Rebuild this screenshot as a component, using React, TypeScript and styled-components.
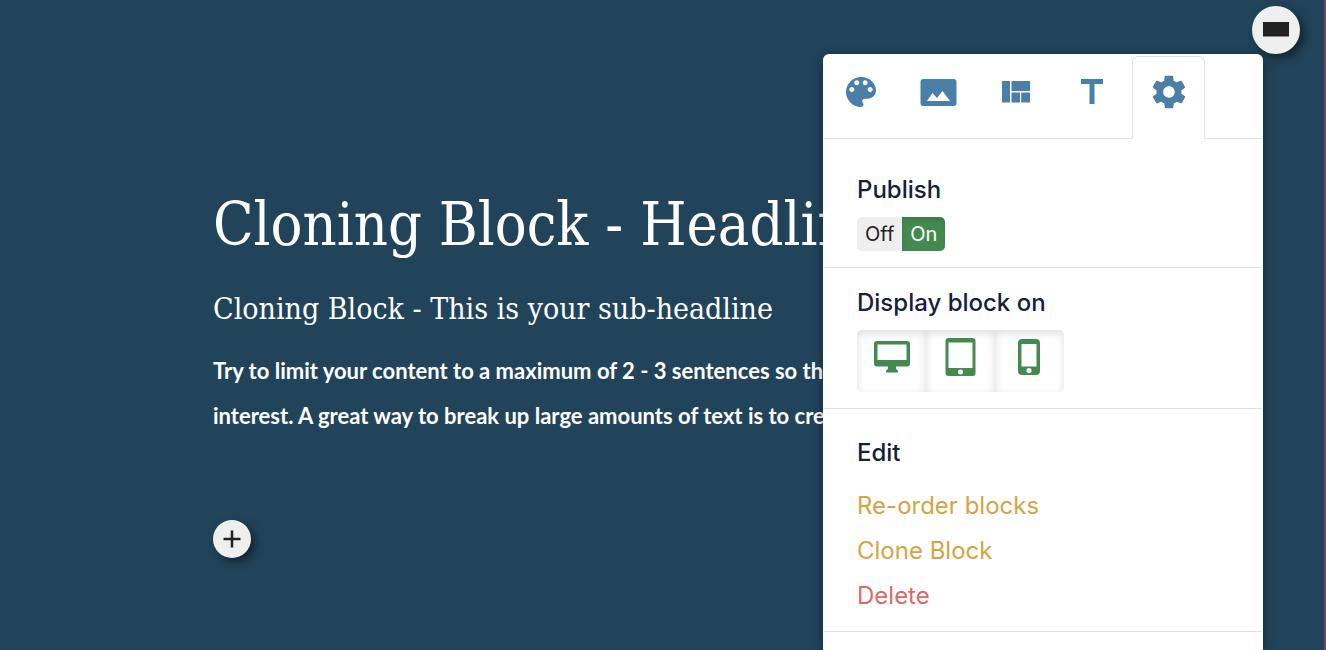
import React, { useState } from "react";
import styled, { createGlobalStyle } from "styled-components";
import { IoMdColorPalette, IoMdSettings } from "react-icons/io";

const GlobalStyle = createGlobalStyle`
  *, *::before, *::after { box-sizing: border-box; }
  body {
    margin: 0;
    background: #21445a;
    font-family: Inter, "Liberation Sans", sans-serif;
  }
`;

const Page = styled.div`
  position: relative;
  min-height: 100vh;
  overflow: hidden;
  background: #21445a;
  border-right: 2px solid #823d72;
`;

const Block = styled.main`
  padding: 185px 0 88px 213px;
  color: #fff;
  white-space: nowrap;
`;

const Headline = styled.h1`
  margin: 0;
  font: 400 59px/80px "DejaVu Serif Condensed", "DejaVu Serif", serif;
`;

const SubHeadline = styled.h2`
  margin: 24px 0 0;
  font: 400 30px/40px "DejaVu Serif Condensed", "DejaVu Serif", serif;
`;

const BodyText = styled.p`
  margin: 19px 0 0;
  font: 700 22px/45px Lato, sans-serif;
`;

const RoundButton = styled.button<{ $size: number }>`
  display: flex;
  align-items: center;
  justify-content: center;
  width: ${(p) => p.$size}px;
  height: ${(p) => p.$size}px;
  padding: 0;
  border: 0;
  border-radius: 50%;
  background: #efefef;
  color: #222;
  box-shadow: 4px 4px 10px rgba(0, 0, 0, 0.5);
  cursor: pointer;
`;

const AddButton = styled(RoundButton)`
  margin-top: 82px;
`;

const CollapseButton = styled(RoundButton)`
  position: absolute;
  top: 6px;
  right: 24px;
`;

const Panel = styled.aside`
  position: absolute;
  top: 54px;
  right: 61px;
  bottom: 0;
  width: 440px;
  padding: 2px 1px 0;
  border-radius: 6px 6px 0 0;
  background: #fff;
  color: #16203a;
  box-shadow: 0 2px 12px rgba(0, 0, 0, 0.4);
`;

const Tabs = styled.div`
  display: flex;
  gap: 4px;
  height: 83px;
  border-bottom: 1px solid #e2e2e4;
`;

const Tab = styled.button<{ $active: boolean }>`
  display: flex;
  justify-content: center;
  width: 73px;
  height: 83px;
  padding: 15px 0 0;
  border: 1px solid ${(p) => (p.$active ? "#e2e2e4" : "transparent")};
  border-bottom-color: ${(p) => (p.$active ? "#fff" : "#e2e2e4")};
  border-radius: ${(p) => (p.$active ? "6px 6px 0 0" : "0")};
  background: transparent;
  color: #4a7fa7;
  cursor: pointer;
`;

const Section = styled.section<{ $top: number; $bottom?: number }>`
  padding: ${(p) => p.$top}px 33px ${(p) => p.$bottom ?? 16}px;
  border-bottom: 1px solid #e2e2e4;
`;

const Title = styled.h3`
  margin: 0;
  font-size: 24px;
  font-weight: 500;
  line-height: 36px;
`;

const Group = styled.div`
  display: flex;
  width: fit-content;
  margin-top: 9px;
  overflow: hidden;
  border-radius: 5px;
`;

const HiddenInput = styled.input`
  position: absolute;
  opacity: 0;
  pointer-events: none;
`;

const Choice = styled.label<{ $on: boolean }>`
  padding: 0 8px;
  font-size: 20px;
  line-height: 34px;
  background: ${(p) => (p.$on ? "#448a50" : "#efefef")};
  color: ${(p) => (p.$on ? "#fff" : "#222")};
  box-shadow: ${(p) => (p.$on ? "inset 0 3px 5px rgba(0, 0, 0, 0.12)" : "none")};
  cursor: pointer;
`;

const Device = styled.label<{ $on: boolean }>`
  display: flex;
  justify-content: center;
  width: 69px;
  height: 62px;
  padding-top: 7px;
  background: #fff;
  color: ${(p) => (p.$on ? "#448a50" : "#999")};
  box-shadow: inset 0 3px 8px rgba(0, 0, 0, 0.14);
  cursor: pointer;
`;

const Links = styled.nav`
  display: flex;
  flex-direction: column;
  align-items: flex-start;
  margin-top: 12px;
`;

const ActionLink = styled.a<{ $danger?: boolean }>`
  font-size: 24px;
  line-height: 45px;
  color: ${(p) => (p.$danger ? "#dc6a67" : "#d3a545")};
  text-decoration: none;
`;

const ImageIcon = () => (
  <svg width="40" height="40" viewBox="0 0 40 40" fill="currentColor" aria-hidden="true">
    <path fillRule="evenodd" d="M5.500 7h30a3 3 0 0 1 3 3v21a3 3 0 0 1-3 3h-30a3 3 0 0 1-3-3V10a3 3 0 0 1 3-3ZM9 29h23L24.500 19l-5.500 7-4.500-5Z" />
  </svg>
);

const LayoutIcon = () => (
  <svg width="40" height="40" viewBox="0 0 40 40" fill="currentColor" aria-hidden="true">
    <path d="M7 9h8v21.500H7ZM16.500 9H35v10H16.500ZM16.500 20.500H25v10h-8.500ZM26.200 20.500H35v10h-8.800Z" />
  </svg>
);

const TextIcon = () => (
  <svg width="40" height="40" viewBox="0 0 40 40" fill="currentColor" aria-hidden="true">
    <path d="M9 7h22v5h-8.500v20h-5V12H9Z" />
  </svg>
);

const DesktopIcon = () => (
  <svg width="40" height="40" viewBox="0 0 40 40" fill="currentColor" aria-hidden="true">
    <path fillRule="evenodd" d="M5 4h30a3 3 0 0 1 3 3v19.500a3 3 0 0 1-3 3H24v2l2 2.500v1.500H14V34l2-2.500v-2H5a3 3 0 0 1-3-3V7a3 3 0 0 1 3-3Zm.500 3.500V23h29V7.500Z" />
  </svg>
);

const TabletIcon = () => (
  <svg width="40" height="40" viewBox="0 0 40 40" fill="currentColor" aria-hidden="true">
    <path fillRule="evenodd" d="M7.500 1h24a3 3 0 0 1 3 3v32a3 3 0 0 1-3 3h-24a3 3 0 0 1-3-3V4a3 3 0 0 1 3-3Zm0 4.500V31h24V5.500ZM19.500 32.500a2.500 2.500 0 1 0 0 5 2.500 2.500 0 0 0 0-5Z" />
  </svg>
);

const PhoneIcon = () => (
  <svg width="40" height="40" viewBox="0 0 40 40" fill="currentColor" aria-hidden="true">
    <path fillRule="evenodd" d="M12 2h14a4 4 0 0 1 4 4v28a4 4 0 0 1-4 4H12a4 4 0 0 1-4-4V6a4 4 0 0 1 4-4Zm-.500 5v22.500h15V7ZM19 31a2.600 2.600 0 1 0 0 5.200A2.600 2.600 0 0 0 19 31Z" />
  </svg>
);

const tabs = [
  { name: "Colors", icon: <IoMdColorPalette size={40} /> },
  { name: "Image", icon: <ImageIcon /> },
  { name: "Layout", icon: <LayoutIcon /> },
  { name: "Text", icon: <TextIcon /> },
  { name: "Settings", icon: <IoMdSettings size={40} /> },
];

const devices = [
  { name: "Desktop", icon: <DesktopIcon /> },
  { name: "Tablet", icon: <TabletIcon /> },
  { name: "Phone", icon: <PhoneIcon /> },
];

export default function App() {
  const [tab, setTab] = useState("Settings");
  const [published, setPublished] = useState("On");
  const [shown, setShown] = useState(["Desktop", "Tablet", "Phone"]);

  const toggle = (name: string) =>
    setShown((s) => (s.includes(name) ? s.filter((n) => n !== name) : [...s, name]));

  return (
    <>
      <GlobalStyle />
      <Page>
        <Block>
          <Headline>Cloning Block - Headline</Headline>
          <SubHeadline>Cloning Block - This is your sub-headline</SubHeadline>
          <BodyText>
            Try to limit your content to a maximum of 2 - 3 sentences so that
            <br />
            interest. A great way to break up large amounts of text is to create
          </BodyText>
          <AddButton $size={38} type="button" aria-label="Add element">
            <svg width="18" height="18" viewBox="0 0 18 18" fill="none" stroke="currentColor" strokeWidth="2.500">
              <path d="M9 .500v17M.500 9h17" />
            </svg>
          </AddButton>
        </Block>
        <Panel>
          <Tabs role="tablist">
            {tabs.map((t) => (
              <Tab
                key={t.name}
                type="button"
                role="tab"
                aria-label={t.name}
                aria-selected={tab === t.name}
                $active={tab === t.name}
                onClick={() => setTab(t.name)}
              >
                {t.icon}
              </Tab>
            ))}
          </Tabs>
          <Section $top={33}>
            <Title>Publish</Title>
            <Group role="radiogroup" aria-label="Publish">
              {["Off", "On"].map((v) => (
                <Choice key={v} $on={published === v}>
                  <HiddenInput
                    type="radio"
                    name="publish"
                    checked={published === v}
                    onChange={() => setPublished(v)}
                  />
                  {v}
                </Choice>
              ))}
            </Group>
          </Section>
          <Section $top={17}>
            <Title>Display block on</Title>
            <Group>
              {devices.map((d) => (
                <Device key={d.name} $on={shown.includes(d.name)}>
                  <HiddenInput
                    type="checkbox"
                    aria-label={d.name}
                    checked={shown.includes(d.name)}
                    onChange={() => toggle(d.name)}
                  />
                  {d.icon}
                </Device>
              ))}
            </Group>
          </Section>
          <Section $top={26} $bottom={13}>
            <Title>Edit</Title>
            <Links>
              <ActionLink href="#reorder">Re-order blocks</ActionLink>
              <ActionLink href="#clone">Clone Block</ActionLink>
              <ActionLink href="#delete" $danger>
                Delete
              </ActionLink>
            </Links>
          </Section>
        </Panel>
        <CollapseButton $size={48} type="button" aria-label="Collapse panel">
          <svg width="26" height="16" viewBox="0 0 26 16" fill="currentColor">
            <path d="M0 0h26v14.500H0Z" />
          </svg>
        </CollapseButton>
      </Page>
    </>
  );
}
